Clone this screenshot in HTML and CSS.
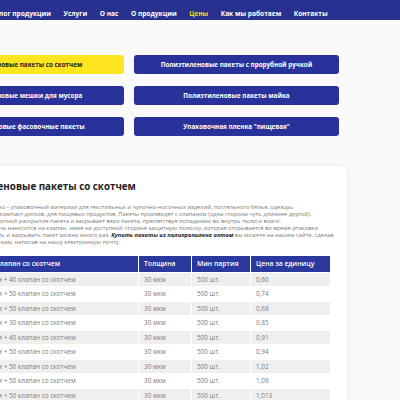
FILE: index.html
```html
<!DOCTYPE html>
<html lang="ru">
<head>
<meta charset="utf-8">
<title>Цены</title>
<link rel="stylesheet" href="styles.css">
</head>
<body>
<nav class="nav">
  <ul class="nav-list">
    <li><a class="nav-link" href="#">Каталог продукции</a></li>
    <li><a class="nav-link" href="#">Услуги</a></li>
    <li><a class="nav-link" href="#">О нас</a></li>
    <li><a class="nav-link" href="#">О продукции</a></li>
    <li><a class="nav-link active" href="#">Цены</a></li>
    <li><a class="nav-link" href="#">Как мы работаем</a></li>
    <li><a class="nav-link" href="#">Контакты</a></li>
  </ul>
</nav>
<main class="main">
  <div class="cats">
    <a class="cat active" href="#">Полиэтиленовые пакеты со скотчем</a>
    <a class="cat" href="#">Полиэтиленовые пакеты с прорубной ручкой</a>
    <a class="cat" href="#">Полиэтиленовые мешки для мусора</a>
    <a class="cat" href="#">Полиэтиленовые пакеты майка</a>
    <a class="cat" href="#">Полиэтиленовые фасовочные пакеты</a>
    <a class="cat" href="#">Упаковочная пленка "пищевая"</a>
  </div>
  <section class="card">
    <h1 class="title">Полиэтиленовые пакеты со скотчем</h1>
    <p class="text">Всё точно изготовлено – упаковочный материал для текстильных и чулочно-носочных изделий, постельного белья, одежды,<br>
    журналов, открыток, компакт-дисков, для пищевых продуктов. Пакеты производят с клапаном (одна сторона чуть длиннее другой),<br>
    который даже при плотной раскрытие пакета и закрывает верх пакета, препятствуя попаданию во внутрь пыли и влаги.<br>
    Клеевой слой от скотча наносится на клапан, имея на доступной стороне защитную полоску, которая открывается во время упаковки<br>
    Такой пакет открывать и закрывать пакет можно много раз. <b><i>Купить пакеты из полипропилена оптом</i></b> вы можете на нашем сайте, сделав<br>
    заявку или позвонив нам, написав на нашу электронную почту.</p>
    <table class="prices">
      <thead>
        <tr><th>Размер пакета, клапан со скотчем</th><th>Толщина</th><th>Мин партия</th><th>Цена за единицу</th></tr>
      </thead>
      <tbody>
        <tr><td>Пакет БОПП 4×6 см + 40 клапан со скотчем</td><td>30 мкм</td><td>500 шт.</td><td>0,60</td></tr>
        <tr><td>Пакет БОПП 5×7 см + 50 клапан со скотчем</td><td>30 мкм</td><td>500 шт.</td><td>0,74</td></tr>
        <tr><td>Пакет БОПП 6×8 см + 50 клапан со скотчем</td><td>30 мкм</td><td>500 шт.</td><td>0,68</td></tr>
        <tr><td>Пакет БОПП 7×9 см + 30 клапан со скотчем</td><td>30 мкм</td><td>500 шт.</td><td>0,85</td></tr>
        <tr><td>Пакет БОПП 8×9 см + 40 клапан со скотчем</td><td>30 мкм</td><td>500 шт.</td><td>0,91</td></tr>
        <tr><td>Пакет БОПП 8×9 см + 50 клапан со скотчем</td><td>30 мкм</td><td>500 шт.</td><td>0,94</td></tr>
        <tr><td>Пакет БОПП 9×9 см + 50 клапан со скотчем</td><td>30 мкм</td><td>500 шт.</td><td>1,02</td></tr>
        <tr><td>Пакет БОПП 9×9 см + 50 клапан со скотчем</td><td>30 мкм</td><td>500 шт.</td><td>1,08</td></tr>
        <tr><td>Пакет БОПП 9×9 см + 50 клапан со скотчем</td><td>30 мкм</td><td>500 шт.</td><td>1,013</td></tr>
      </tbody>
    </table>
  </section>
</main>
</body>
</html>
```
FILE: styles.css
```css
html, body {
  margin: 0;
  padding: 0;
}
body {
  background: #fafafa;
  font-family: "Open Sans", "DejaVu Sans", sans-serif;
  overflow: hidden;
}
.nav {
  background: #28318f;
  height: 20px;
  display: flex;
  align-items: center;
}
.nav-list {
  display: flex;
  gap: 12.5px;
  margin: 0 0 0 -17px;
  padding: 0;
  list-style: none;
  white-space: nowrap;
}
.nav-link {
  color: #fff;
  font-size: 6.6px;
  font-weight: 700;
  text-decoration: none;
}
.nav-link.active {
  color: #f2d718;
}
.main {
  margin-left: -95px;
  width: 442px;
}
.cats {
  display: grid;
  grid-template-columns: 205px 205px;
  column-gap: 10px;
  row-gap: 12px;
  margin: 35px 0 0 14px;
}
.cat {
  height: 19px;
  border-radius: 3px;
  background: #28329a;
  color: #fff;
  font-size: 6.3px;
  font-weight: 700;
  display: flex;
  align-items: center;
  justify-content: center;
  white-space: nowrap;
  text-decoration: none;
}
.cat.active {
  background: #ffe51f;
  color: #1d1d1d;
}
.card {
  margin: 30px 0 0 18px;
  width: 390px;
  background: #fff;
  border-radius: 6px;
  box-shadow: 0 0 6px rgba(0, 0, 0, 0.07);
  padding: 15px 17px 20px;
}
.title {
  margin: 0 0 0 7px;
  font-size: 9.8px;
  line-height: 12px;
  font-weight: 700;
  color: #222;
}
.text {
  margin: 10.5px 0 0;
  font-size: 5.75px;
  line-height: 7px;
  color: #7a7a7a;
  white-space: nowrap;
}
.text b {
  color: #222;
}
.prices {
  margin-top: 10px;
  width: 100%;
  border-collapse: collapse;
  font-size: 6.4px;
  color: #7a7a7a;
}
.prices th {
  background: #2b389d;
  color: #fff;
  font-size: 6.8px;
  font-weight: 600;
  text-align: left;
  height: 16px;
  padding: 0 5px;
  border: 1px solid #fff;
  border-top: 0;
}
.prices td {
  height: 14.5px;
  padding: 0 5px;
  border: 1px solid #fff;
  box-sizing: border-box;
}
.prices th:first-child,
.prices td:first-child {
  padding-left: 2px;
}
.prices th:nth-child(1) { width: 191px; }
.prices th:nth-child(2) { width: 42px; }
.prices th:nth-child(3) { width: 48px; }
.prices tbody tr:nth-child(odd) td {
  background: #efefef;
}
.prices th:first-child, .prices td:first-child { border-left: 0; }
.prices th:last-child, .prices td:last-child { border-right: 0; }
```
